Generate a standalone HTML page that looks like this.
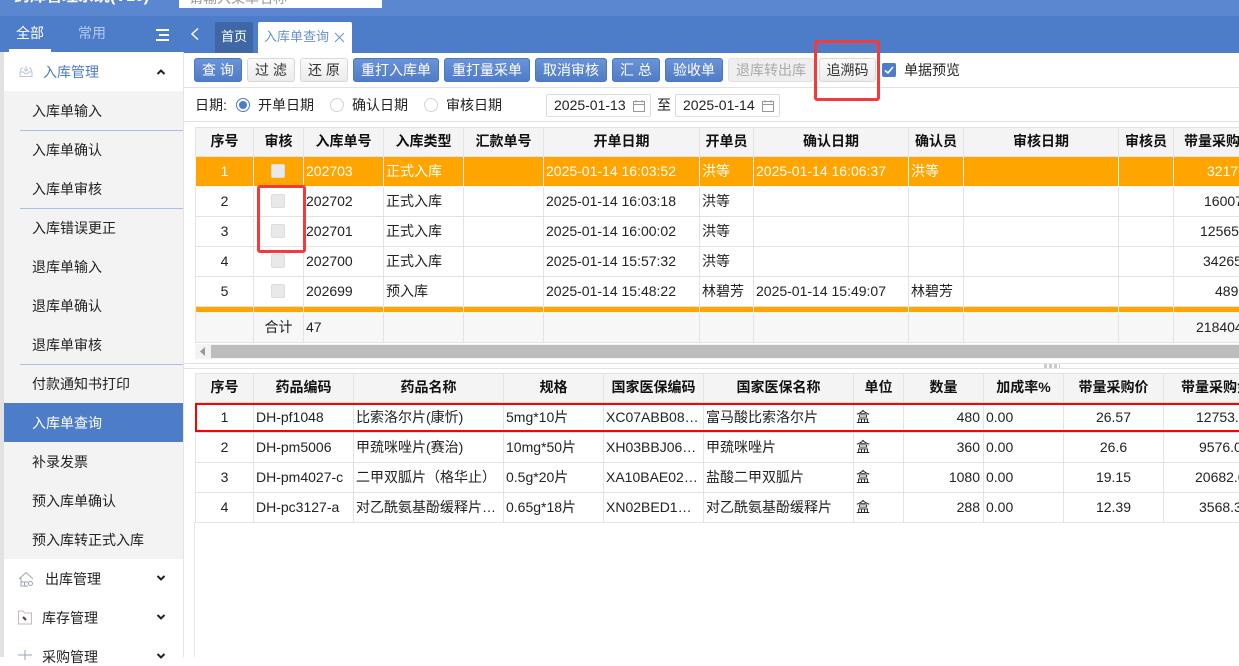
<!DOCTYPE html>
<html lang="zh">
<head>
<meta charset="utf-8">
<style>
*{box-sizing:border-box}
html,body{margin:0;padding:0}
body{width:1239px;height:657px;overflow:hidden;position:relative;background:#fff;font:14px "Liberation Sans","Noto Sans CJK SC",sans-serif;color:#111}
.a{position:absolute}
.btn{position:absolute;top:58px;height:24px;line-height:22px;text-align:center;background:linear-gradient(#6b93d6,#4f7dc7);color:#fff;border:1px solid #4a78c2;border-radius:3px;font-size:14px;white-space:nowrap}
.btn.w{background:linear-gradient(#fafafa,#ececec);color:#333;border-color:#d8d8d8}
.btn.d{background:#eee;color:#aaa;border-color:#e2e2e2}
.mi{position:absolute;left:32px;font-size:14px;line-height:39px;height:39px;white-space:nowrap;color:#222;margin-top:1px}
.sep{position:absolute;left:20px;width:163px;height:1px;background:#a9c0e6}
table{position:absolute;border-collapse:collapse;table-layout:fixed;font-size:14px}
td,th{border:1px solid #e3e3e3;padding:0 2px 2px;height:30px;white-space:nowrap;overflow:hidden;text-overflow:ellipsis;font-weight:normal;color:#222;text-align:left}
th{background:#f4f4f4;font-weight:bold;text-align:center;color:#111;height:29px}
td.c{text-align:center}
td.r{text-align:right;padding-right:3px}
tr.s td{background:#ffa500;color:#fff;border-color:#f3f3f3}
tr.bar td{height:6px;padding:0;background:#ffa500;font-size:0;line-height:0;border-color:#f0f0f0}
tr.t td{background:#f7f7f7}
.cb{display:inline-block;width:14px;height:14px;background:#e9e9e9;border:1px solid #dcdcdc;border-radius:2px;vertical-align:middle;position:relative;left:-1px;top:-1px}
.radio{position:absolute;top:98px;width:14px;height:14px;border:1px solid #d4d4d4;border-radius:50%;background:#fff}
.lbl{position:absolute;top:96px;line-height:18px;font-size:14px;color:#222;white-space:nowrap}
.date{position:absolute;top:94px;width:105px;height:23px;border:1px solid #ddd;border-radius:2px;line-height:21px;padding-left:7px;font-size:14px;color:#222;background:#fff}
.date svg{position:absolute;right:4px;top:4px}
.red{position:absolute;border:3px solid #f43a3a;border-radius:3px}
</style>
</head>
<body>
<!-- header -->
<div class="a" style="left:0;top:0;width:1239px;height:16px;background:#5b86d0"></div>
<div class="a" style="left:0;top:16px;width:1239px;height:37px;background:#4d7cc8"></div>
<div class="a" style="left:14px;top:-13px;font-size:16px;line-height:20px;font-weight:bold;color:#fff;white-space:nowrap">药库管理系统(V10)</div>
<div class="a" style="left:179px;top:-9px;width:203px;height:17px;background:#fff;color:#999;font-size:14px;line-height:14px;padding-left:10px;white-space:nowrap;overflow:hidden">请输入菜单名称</div>

<!-- left strip -->
<div class="a" style="left:0;top:52px;width:4px;height:605px;background:#e2e2e2"></div>

<!-- sidebar -->
<div class="a" style="left:16px;top:25px;color:#fff;line-height:16px;font-size:14px">全部</div>
<div class="a" style="left:78px;top:25px;color:#b5cbee;line-height:16px;font-size:14px">常用</div>
<div class="a" style="left:156px;top:29px;width:13px;height:2px;background:#fff"></div>
<div class="a" style="left:159px;top:34px;width:10px;height:2px;background:#fff"></div>
<div class="a" style="left:156px;top:39px;width:13px;height:2px;background:#fff"></div>
<div class="a" style="left:9px;top:49px;width:42px;height:4px;background:#fff"></div>

<div class="a" style="left:4px;top:52px;width:180px;height:605px;background:#fff;border-right:1px solid #e4e4e4"></div>
<div class="a" style="left:4px;top:91px;width:179px;height:468px;background:#f3f3f3"></div>

<svg class="a" style="left:19px;top:64px" width="14" height="14" viewBox="0 0 14 14" fill="none" stroke="#b9c6de" stroke-width="1"><path d="M4 4H2.500L1 8V12.500H13V8L11.500 4H10M1 8H4.500L5.500 9.500H8.500L9.500 8H13M7 2V7M5 5L7 7L9 5"/></svg>
<div class="a" style="left:43px;top:63px;line-height:18px;color:#4d7cc8;font-size:14px">入库管理</div>
<svg class="a" style="left:156px;top:68px" width="10" height="8" viewBox="0 0 10 8" fill="none" stroke="#222" stroke-width="2"><path d="M1.500 6L5 2.500L8.500 6"/></svg>

<div class="mi" style="top:91px">入库单输入</div>
<div class="sep" style="top:130px"></div>
<div class="mi" style="top:130px">入库单确认</div>
<div class="mi" style="top:169px">入库单审核</div>
<div class="sep" style="top:208px"></div>
<div class="mi" style="top:208px">入库错误更正</div>
<div class="mi" style="top:247px">退库单输入</div>
<div class="mi" style="top:286px">退库单确认</div>
<div class="mi" style="top:325px">退库单审核</div>
<div class="sep" style="top:364px"></div>
<div class="mi" style="top:364px">付款通知书打印</div>
<div class="a" style="left:4px;top:403px;width:179px;height:39px;background:#4d7cc8"></div>
<div class="mi" style="top:403px;color:#fff">入库单查询</div>
<div class="mi" style="top:442px">补录发票</div>
<div class="mi" style="top:481px">预入库单确认</div>
<div class="mi" style="top:520px">预入库转正式入库</div>

<svg class="a" style="left:18px;top:571px" width="16" height="16" viewBox="0 0 16 16" fill="none" stroke="#9aa5b5" stroke-width="1"><path d="M1 8L8 1.500L15 8M3 7V15H10M3 11H10M6.500 11V15"/><circle cx="12.500" cy="12.500" r="2"/></svg>
<div class="a" style="left:45px;top:570px;line-height:18px;font-size:14px;color:#222">出库管理</div>
<svg class="a" style="left:156px;top:574px" width="10" height="8" viewBox="0 0 10 8" fill="none" stroke="#222" stroke-width="2"><path d="M1.500 2L5 5.500L8.500 2"/></svg>

<svg class="a" style="left:18px;top:610px" width="14" height="15" viewBox="0 0 14 15" fill="none" stroke="#c9b9b9" stroke-width="1"><path d="M.5 1H5L6.500 3H13.500V14H.5Z"/><path d="M5 7L8 10" stroke="#444" stroke-width="2"/></svg>
<div class="a" style="left:42px;top:609px;line-height:18px;font-size:14px;color:#222">库存管理</div>
<svg class="a" style="left:156px;top:613px" width="10" height="8" viewBox="0 0 10 8" fill="none" stroke="#222" stroke-width="2"><path d="M1.500 2L5 5.500L8.500 2"/></svg>

<svg class="a" style="left:18px;top:650px" width="14" height="10" viewBox="0 0 14 10" fill="none" stroke="#9aa5b5" stroke-width="1"><path d="M7 0V10M0 5H14"/></svg>
<div class="a" style="left:42px;top:648px;line-height:18px;font-size:14px;color:#222">采购管理</div>
<svg class="a" style="left:156px;top:652px" width="10" height="8" viewBox="0 0 10 8" fill="none" stroke="#222" stroke-width="2"><path d="M1.500 2L5 5.500L8.500 2"/></svg>

<!-- tabs -->
<svg class="a" style="left:190px;top:27px" width="10" height="14" viewBox="0 0 10 14" fill="none" stroke="#fff" stroke-width="1.500"><path d="M8 1.500L2 7L8 12.500"/></svg>
<div class="a" style="left:215px;top:22px;width:38px;height:31px;background:#3f66a5;color:#fff;text-align:center;line-height:30px;border-radius:2px 2px 0 0;font-size:13px">首页</div>
<div class="a" style="left:258px;top:22px;width:94px;height:31px;background:#fff;color:#6b90cf;line-height:30px;padding-left:6px;border-radius:2px 2px 0 0;white-space:nowrap;font-size:13px">入库单查询</div>
<svg class="a" style="left:334px;top:32px" width="11" height="11" viewBox="0 0 11 11" fill="none" stroke="#6b90cf" stroke-width="1"><path d="M1 1L10 10M10 1L1 10"/></svg>

<!-- toolbar -->
<div class="btn" style="left:194px;width:48px">查 询</div>
<div class="btn w" style="left:247px;width:48px">过 滤</div>
<div class="btn w" style="left:300px;width:48px">还 原</div>
<div class="btn" style="left:353px;width:86px">重打入库单</div>
<div class="btn" style="left:444px;width:86px">重打量采单</div>
<div class="btn" style="left:535px;width:72px">取消审核</div>
<div class="btn" style="left:612px;width:48px">汇 总</div>
<div class="btn" style="left:665px;width:58px">验收单</div>
<div class="btn d" style="left:728px;width:86px">退库转出库</div>
<div class="btn w" style="left:819px;width:57px">追溯码</div>
<svg class="a" style="left:882px;top:63px" width="14" height="14" viewBox="0 0 14 14"><rect width="14" height="14" rx="2" fill="#4d7cc8"/><path d="M3 7.500L6 10L11 4" fill="none" stroke="#fff" stroke-width="1.600"/></svg>
<div class="a" style="left:904px;top:61px;line-height:18px;color:#222">单据预览</div>
<div class="a" style="left:184px;top:87px;width:1055px;height:1px;background:#e2e2e2"></div>

<!-- filter row -->
<div class="lbl" style="left:195px">日期:</div>
<div class="radio" style="left:236px;border-color:#4d7cc8"></div>
<div class="a" style="left:239px;top:101px;width:8px;height:8px;border-radius:50%;background:#4d7cc8"></div>
<div class="lbl" style="left:258px">开单日期</div>
<div class="radio" style="left:330px"></div>
<div class="lbl" style="left:352px">确认日期</div>
<div class="radio" style="left:424px"></div>
<div class="lbl" style="left:446px">审核日期</div>
<div class="date" style="left:546px">2025-01-13<svg width="14" height="14" viewBox="0 0 14 14" fill="none" stroke="#999" stroke-width="1"><path d="M1.500 2.500H12.500V12.500H1.500ZM1.500 5.500H12.500M4 1V3.500M10 1V3.500"/></svg></div>
<div class="lbl" style="left:657px">至</div>
<div class="date" style="left:675px">2025-01-14<svg width="14" height="14" viewBox="0 0 14 14" fill="none" stroke="#999" stroke-width="1"><path d="M1.500 2.500H12.500V12.500H1.500ZM1.500 5.500H12.500M4 1V3.500M10 1V3.500"/></svg></div>
<div class="a" style="left:184px;top:121px;width:1055px;height:1px;background:#e2e2e2"></div>

<!-- top table -->
<table style="left:195px;top:127px;width:1110px">
<colgroup><col style="width:58px"><col style="width:50px"><col style="width:80px"><col style="width:80px"><col style="width:80px"><col style="width:156px"><col style="width:54px"><col style="width:155px"><col style="width:55px"><col style="width:155px"><col style="width:55px"><col style="width:132px"></colgroup>
<tr><th>序号</th><th>审核</th><th>入库单号</th><th>入库类型</th><th>汇款单号</th><th>开单日期</th><th>开单员</th><th>确认日期</th><th>确认员</th><th>审核日期</th><th>审核员</th><th style="text-align:left;padding-left:10px">带量采购价</th></tr>
<tr class="s"><td class="c">1</td><td class="c"><span class="cb"></span></td><td>202703</td><td>正式入库</td><td></td><td>2025-01-14 16:03:52</td><td>洪等</td><td>2025-01-14 16:06:37</td><td>洪等</td><td></td><td></td><td style="padding-left:33px">32177</td></tr>
<tr><td class="c">2</td><td class="c"><span class="cb"></span></td><td>202702</td><td>正式入库</td><td></td><td>2025-01-14 16:03:18</td><td>洪等</td><td></td><td></td><td></td><td></td><td style="padding-left:30px">160070</td></tr>
<tr><td class="c">3</td><td class="c"><span class="cb"></span></td><td>202701</td><td>正式入库</td><td></td><td>2025-01-14 16:00:02</td><td>洪等</td><td></td><td></td><td></td><td></td><td style="padding-left:26px">125650</td></tr>
<tr><td class="c">4</td><td class="c"><span class="cb"></span></td><td>202700</td><td>正式入库</td><td></td><td>2025-01-14 15:57:32</td><td>洪等</td><td></td><td></td><td></td><td></td><td style="padding-left:29px">34265</td></tr>
<tr><td class="c">5</td><td class="c"><span class="cb"></span></td><td>202699</td><td>预入库</td><td></td><td>2025-01-14 15:48:22</td><td>林碧芳</td><td>2025-01-14 15:49:07</td><td>林碧芳</td><td></td><td></td><td style="padding-left:41px">4890</td></tr>
<tr class="bar"><td></td><td></td><td></td><td></td><td></td><td></td><td></td><td></td><td></td><td></td><td></td><td></td></tr>
<tr class="t"><td></td><td class="c">合计</td><td>47</td><td></td><td></td><td></td><td></td><td></td><td></td><td></td><td></td><td style="padding-left:22px">218404</td></tr>
</table>

<!-- scrollbar -->
<div class="a" style="left:195px;top:344px;width:1044px;height:15px;background:#f3f3f3"></div>
<div class="a" style="left:211px;top:345px;width:1028px;height:13px;background:#bdbdbd"></div>
<svg class="a" style="left:200px;top:347px" width="5" height="9" viewBox="0 0 5 9"><path d="M5 0V9L0 4.500Z" fill="#999"/></svg>

<!-- splitter -->
<div class="a" style="left:184px;top:363px;width:1055px;height:1px;background:#e2e2e2"></div>
<div class="a" style="left:184px;top:368px;width:1055px;height:1px;background:#e2e2e2"></div>
<div class="a" style="left:1044px;top:364px;width:16px;height:4px;background:repeating-linear-gradient(90deg,#ccc 0 3px,#fff 3px 5px)"></div>

<!-- lower table -->
<table style="left:195px;top:373px;width:1110px">
<colgroup><col style="width:58px"><col style="width:100px"><col style="width:150px"><col style="width:100px"><col style="width:100px"><col style="width:150px"><col style="width:50px"><col style="width:80px"><col style="width:80px"><col style="width:100px"><col style="width:142px"></colgroup>
<tr><th>序号</th><th>药品编码</th><th>药品名称</th><th>规格</th><th>国家医保编码</th><th>国家医保名称</th><th>单位</th><th>数量</th><th>加成率%</th><th>带量采购价</th><th style="text-align:left;padding-left:17px">带量采购金额</th></tr>
<tr><td class="c">1</td><td>DH-pf1048</td><td>比索洛尔片(康忻)</td><td>5mg*10片</td><td>XC07ABB08…</td><td>富马酸比索洛尔片</td><td>盒</td><td class="r">480</td><td>0.00</td><td class="c">26.57</td><td style="padding-left:32px">12753.6</td></tr>
<tr><td class="c">2</td><td>DH-pm5006</td><td>甲巯咪唑片(赛治)</td><td>10mg*50片</td><td>XH03BBJ06…</td><td>甲巯咪唑片</td><td>盒</td><td class="r">360</td><td>0.00</td><td class="c">26.6</td><td style="padding-left:35px">9576.0</td></tr>
<tr><td class="c">3</td><td>DH-pm4027-c</td><td>二甲双胍片（格华止）</td><td>0.5g*20片</td><td>XA10BAE02…</td><td>盐酸二甲双胍片</td><td>盒</td><td class="r">1080</td><td>0.00</td><td class="c">19.15</td><td style="padding-left:31px">20682.0</td></tr>
<tr><td class="c">4</td><td>DH-pc3127-a</td><td>对乙酰氨基酚缓释片…</td><td>0.65g*18片</td><td>XN02BED1…</td><td>对乙酰氨基酚缓释片</td><td>盒</td><td class="r">288</td><td>0.00</td><td class="c">12.39</td><td style="padding-left:35px">3568.3</td></tr>
</table>

<!-- annotations -->
<div class="a" style="left:195px;top:403px;width:1044px;height:29px;border:solid #f00;border-width:2px 0 2px 2px"></div>
<div class="red" style="left:814px;top:40px;width:66px;height:61px"></div>
<div class="red" style="left:257px;top:185px;width:49px;height:68px"></div>

<!-- left edge of content -->
<div class="a" style="left:194px;top:522px;width:1px;height:135px;background:#e6e6e6"></div>
</body>
</html>
